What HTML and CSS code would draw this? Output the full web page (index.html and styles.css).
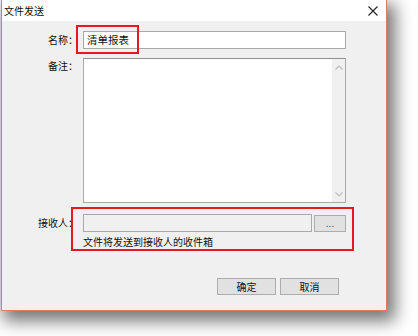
FILE: index.html
```html
<!DOCTYPE html>
<html lang="zh">
<head>
<meta charset="utf-8">
<link rel="stylesheet" href="styles.css">
</head>
<body>
<div class="page">
  <div class="window">
    <div class="titlebar">
      <span class="title">文件发送</span>
      <svg class="close" width="10" height="10" viewBox="0 0 10 10"><path d="M0.5 0.5 L9.5 9.5 M9.5 0.5 L0.5 9.5" stroke="#222" stroke-width="1.1" fill="none"/></svg>
    </div>
    <div class="body">
      <div class="form">
        <div class="label l-name">名称：</div>
        <div class="input name-input">清单报表</div>
        <div class="label l-note">备注：</div>
        <div class="textarea">
          <div class="scrollbar">
            <svg width="8" height="5" viewBox="0 0 8 5"><path d="M0.5 4.5 L4 1 L7.5 4.5" stroke="#bdbdbd" stroke-width="1.2" fill="none"/></svg>
            <svg width="8" height="5" viewBox="0 0 8 5"><path d="M0.5 0.5 L4 4 L7.5 0.5" stroke="#bdbdbd" stroke-width="1.2" fill="none"/></svg>
          </div>
        </div>
        <div class="label l-recv">接收人：</div>
        <div class="recv-row">
          <div class="input recv-input"></div>
          <div class="btn dots">...</div>
        </div>
        <div class="spacer"></div>
        <div class="hint">文件将发送到接收人的收件箱</div>
      </div>
      <div class="actions">
        <div class="btn action">确定</div>
        <div class="btn action">取消</div>
      </div>
    </div>
    <div class="mark mark-name"></div>
    <div class="mark mark-recv"></div>
  </div>
</div>
</body>
</html>
```
FILE: styles.css
```css
html, body {
  margin: 0;
  padding: 0;
  background: #ffffff;
}
body {
  width: 418px;
  height: 336px;
  overflow: hidden;
  font-family: "Noto Sans CJK SC", "Noto Sans", sans-serif;
  font-size: 10px;
  color: #111111;
}
.page {
  padding-left: 1px;
}
.window {
  position: relative;
  width: 384px;
  height: 310px;
  border: 1px solid #e8766a;
  border-top: none;
  background: #f0f0f0;
  box-shadow: 5px 7px 16px 3px rgba(0, 0, 0, 0.55);
}
.titlebar {
  height: 21px;
  background: #ffffff;
  display: flex;
  align-items: center;
  justify-content: space-between;
  padding: 0 8px 0 2px;
}
.title {
  font-size: 10px;
  line-height: 21px;
}
.close {
  display: block;
}
.body {
  padding-top: 10px;
}
.form {
  display: grid;
  grid-template-columns: 76px 263px;
  column-gap: 5px;
}
.label {
  text-align: right;
  line-height: 18px;
  white-space: nowrap;
}
.input {
  box-sizing: border-box;
  height: 18px;
  border: 1px solid #a9a9a9;
  background: #ffffff;
  line-height: 16px;
  padding-left: 3px;
}
.name-input {
  font-size: 10.5px;
}
.l-note {
  margin-top: 8px;
  line-height: 18px;
}
.textarea {
  margin-top: 9px;
  box-sizing: border-box;
  height: 145px;
  border: 1px solid #a9a9a9;
  border-top-color: #8f8f8f;
  background: #ffffff;
  display: flex;
  justify-content: flex-end;
}
.scrollbar {
  width: 13px;
  background: #f0f0f0;
  display: flex;
  flex-direction: column;
  justify-content: space-between;
  align-items: center;
  padding: 6px 0 5px;
}
.scrollbar svg {
  display: block;
}
.l-recv {
  margin-top: 11px;
}
.recv-row {
  margin-top: 11px;
  display: flex;
  gap: 2px;
  height: 18px;
}
.recv-input {
  width: 229px;
  background: #f0f0f0;
  border-color: #a9a9a9;
}
.btn {
  box-sizing: border-box;
  background: #e1e1e1;
  border: 1px solid #adadad;
  text-align: center;
}
.dots {
  width: 32px;
  height: 17px;
  line-height: 13px;
  color: #555;
  margin-top: 1px;
}
.hint {
  line-height: 16px;
  margin-top: 2px;
}
.actions {
  display: flex;
  justify-content: flex-end;
  gap: 4px;
  padding-right: 47px;
  margin-top: 28px;
}
.action {
  width: 59px;
  height: 17px;
  line-height: 15px;
}
.mark {
  position: absolute;
  border: 2px solid #e31b1b;
  box-sizing: border-box;
}
.mark-name {
  left: 74px;
  top: 25px;
  width: 63px;
  height: 29px;
}
.mark-recv {
  left: 69px;
  top: 207px;
  width: 283px;
  height: 44px;
}
```
